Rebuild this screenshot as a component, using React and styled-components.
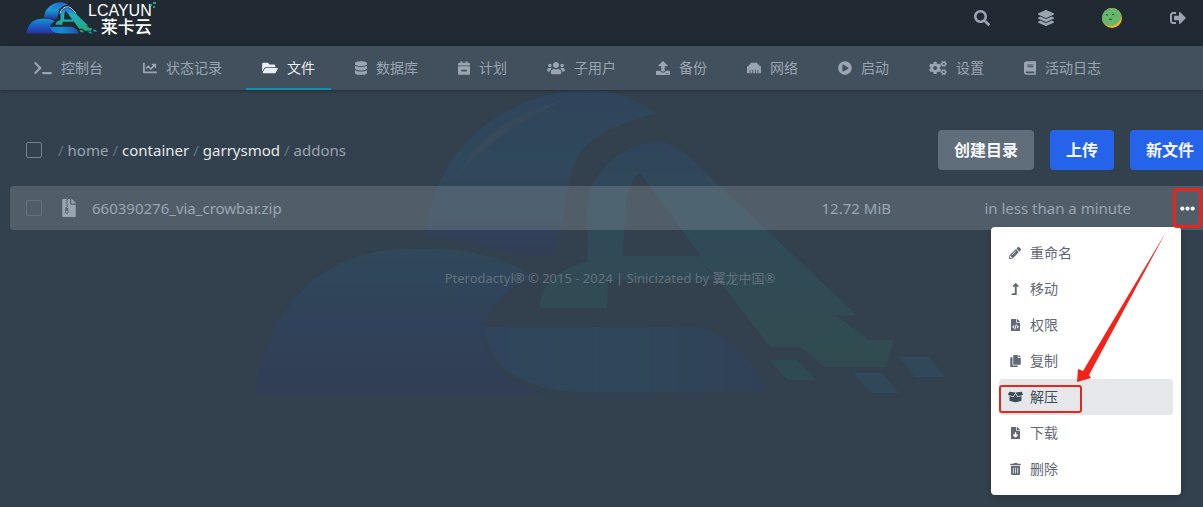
import React, { useState } from 'react';
import styled, { createGlobalStyle } from 'styled-components';
import {
  FaBook,
  FaBoxOpen,
  FaCalendarMinus,
  FaChartLine,
  FaCogs,
  FaCopy,
  FaDatabase,
  FaEllipsisH,
  FaEthernet,
  FaFileArchive,
  FaFileCode,
  FaFileDownload,
  FaFolderOpen,
  FaLayerGroup,
  FaLevelUpAlt,
  FaPencilAlt,
  FaPlayCircle,
  FaSearch,
  FaSignOutAlt,
  FaTerminal,
  FaTrashAlt,
  FaUpload,
  FaUsers,
} from 'react-icons/fa';

const tabs = [
  { label: '控制台', icon: FaTerminal, width: 18 },
  { label: '状态记录', icon: FaChartLine, width: 14 },
  { label: '文件', icon: FaFolderOpen, width: 16, active: true },
  { label: '数据库', icon: FaDatabase, width: 12 },
  { label: '计划', icon: FaCalendarMinus, width: 12 },
  { label: '子用户', icon: FaUsers, width: 18 },
  { label: '备份', icon: FaUpload, width: 14 },
  { label: '网络', icon: FaEthernet, width: 14 },
  { label: '启动', icon: FaPlayCircle, width: 14 },
  { label: '设置', icon: FaCogs, width: 18 },
  { label: '活动日志', icon: FaBook, width: 12 },
];

const actions = [
  { label: '重命名', icon: FaPencilAlt, width: 12 },
  { label: '移动', icon: FaLevelUpAlt, width: 8 },
  { label: '权限', icon: FaFileCode, width: 9 },
  { label: '复制', icon: FaCopy, width: 11 },
  { label: '解压', icon: FaBoxOpen, width: 15, marked: true },
  { label: '下载', icon: FaFileDownload, width: 9 },
  { label: '删除', icon: FaTrashAlt, width: 11 },
];

// the cloud mark, used small in the header and large behind the page
const CloudMark = ({ id, outlined }) => (
  <svg viewBox="255 90 700 305" aria-hidden="true">
    <defs>
      <linearGradient id={`${id}-dome`} x1="0" y1="0" x2="0" y2="1">
        <stop offset="0" stopColor="#1b6fd6" />
        <stop offset="0.5" stopColor="#1796d2" />
        <stop offset="1" stopColor="#2b2f9e" />
      </linearGradient>
      <linearGradient id={`${id}-cloud`} x1="0" y1="0" x2="0" y2="1">
        <stop offset="0" stopColor="#1a93cf" />
        <stop offset="0.5" stopColor="#1c5cc4" />
        <stop offset="1" stopColor="#2c2f9c" />
      </linearGradient>
      <linearGradient id={`${id}-base`} x1="0" y1="0" x2="1" y2="0">
        <stop offset="0" stopColor="#1873e0" />
        <stop offset="0.4" stopColor="#1a8cc8" />
        <stop offset="1" stopColor="#1f4eb4" />
      </linearGradient>
      <linearGradient id={`${id}-arm`} x1="0" y1="0" x2="0" y2="1">
        <stop offset="0" stopColor="#1b6fd6" />
        <stop offset="0.3" stopColor="#1fb0c4" />
        <stop offset="1" stopColor="#22a873" />
      </linearGradient>
    </defs>
    <path
      fill={`url(#${id}-dome)`}
      d="M430 238C430 205 446 165 470 142C500 110 545 90 590 90C620 90 645 102 660 114C620 122 590 138 579 160C569 180 570 225 554 255C515 262 480 240 430 238Z"
    />
    <path
      fill={`url(#${id}-cloud)`}
      d="M258 394C262 350 286 305 316 280C345 258 380 248 412 249C465 246 515 258 535 278C505 290 490 306 488 332C486 362 515 384 552 394Z"
    />
    <path
      fill={`url(#${id}-base)`}
      d="M488 327H700C735 336 757 360 768 392H590C530 392 488 368 488 327Z"
    />
    <path
      fill={`url(#${id}-arm)`}
      fillRule="evenodd"
      d="M543 308C543 284 562 268 590 262C593 236 586 205 595 186C607 162 632 142 660 142C686 142 704 170 740 202L777 237L833 290L860 315H838L872 340H896L890 367H827L804 347H773L727 287L700 258L724 280H611L610 308ZM643 173C626 184 628 222 626 256H704Z"
    />
    <path fill="#1fa58c" d="M773 360H800L820 380H790Z" />
    <path fill="#1d8fc0" d="M856 373H885L902 393H874ZM902 357H932L948 377H918Z" />
    <path
      fill="#b7cbe0"
      fillOpacity="0.4"
      d="M463 173C480 140 515 112 565 101C525 120 495 138 463 173Z"
    />
    {outlined && (
      <path
        fill="none"
        stroke="#dff1fa"
        strokeWidth="9"
        d="M586 200C594 160 626 134 660 134C690 134 710 164 742 196"
      />
    )}
  </svg>
);

const Avatar = () => (
  <svg width="20" height="20" viewBox="0 0 20 20" aria-hidden="true">
    <defs>
      <clipPath id="avatar-clip">
        <circle cx="10" cy="10" r="10" />
      </clipPath>
    </defs>
    <g clipPath="url(#avatar-clip)">
      <rect width="20" height="20" fill="#f5b32a" />
      <circle cx="8.500" cy="7" r="10.800" fill="#66b66c" />
      <path
        d="M4 6.500l2 .8M10 6.800l2-.8M7 11.500q1.500-1 3 0"
        stroke="#24522c"
        strokeWidth="1.200"
        fill="none"
      />
    </g>
  </svg>
);

const App = () => {
  const [allChecked, setAllChecked] = useState(false);
  const [checked, setChecked] = useState(false);

  return (
    <>
      <GlobalStyle />
      <Header>
        <Brand href="#">
          <CloudMark id="brand" outlined />
          <BrandText>
            <BrandName>LCAYUN</BrandName>
            <BrandLocal>莱卡云</BrandLocal>
          </BrandText>
          <Sparks viewBox="0 0 6 6" aria-hidden="true">
            <path d="M0 2h2v2H0zM3 0h3v2H3zM3 4h2v2H3z" />
          </Sparks>
        </Brand>
        <HeaderLinks>
          <HeaderButton type="button" aria-label="搜索"><FaSearch /></HeaderButton>
          <HeaderLink href="#" aria-label="服务器"><FaLayerGroup /></HeaderLink>
          <HeaderLink href="#" aria-label="账户"><Avatar /></HeaderLink>
          <HeaderButton type="button" aria-label="退出"><FaSignOutAlt /></HeaderButton>
        </HeaderLinks>
      </Header>

      <SubNav>
        {tabs.map(({ label, icon: Icon, width, active }) => (
          <Tab key={label} href="#" $active={active}>
            <IconBox $width={width} $height={14}><Icon /></IconBox>
            {label}
          </Tab>
        ))}
      </SubNav>

      <Main>
        <Watermark><CloudMark id="watermark" /></Watermark>
        <Content>
          <Toolbar>
            <Checkbox
              aria-label="全选"
              checked={allChecked}
              onChange={(e) => setAllChecked(e.target.checked)}
            />
            <Breadcrumbs>
              /<Crumb>home</Crumb>
              /<CrumbLink href="#">container</CrumbLink>
              /<CrumbLink href="#">garrysmod</CrumbLink>
              /<Crumb>addons</Crumb>
            </Breadcrumbs>
            <Buttons>
              <Button type="button" $secondary>创建目录</Button>
              <Button type="button">上传</Button>
              <Button type="button">新文件</Button>
            </Buttons>
          </Toolbar>

          <FileRow>
            <Checkbox
              $faint
              aria-label="选择 660390276_via_crowbar.zip"
              checked={checked}
              onChange={(e) => setChecked(e.target.checked)}
            />
            <FileLink href="#">
              <IconBox $width={14} $height={18}><FaFileArchive /></IconBox>
              <FileName>660390276_via_crowbar.zip</FileName>
              <FileSize>12.72 MiB</FileSize>
              <FileDate>in less than a minute</FileDate>
            </FileLink>
            <MenuAnchor>
              <MoreButton type="button" aria-label="更多"><FaEllipsisH /></MoreButton>
              <Menu>
                {actions.map(({ label, icon: Icon, width, marked }) => (
                  <MenuItem key={label} type="button" $marked={marked}>
                    <MenuIcon>
                      <IconBox $width={width} $height={12}><Icon /></IconBox>
                    </MenuIcon>
                    {label}
                  </MenuItem>
                ))}
                <Arrow viewBox="0 0 92 155" aria-hidden="true">
                  <path d="M90 4L13 147L15 150L1 154L2 141L7 143Z" />
                </Arrow>
              </Menu>
            </MenuAnchor>
          </FileRow>

          <Footer>Pterodactyl® © 2015 - 2024 | Sinicizated by 翼龙中国®</Footer>
        </Content>
      </Main>
    </>
  );
};

export default App;

const GlobalStyle = createGlobalStyle`
  *, *::before, *::after {
    box-sizing: border-box;
  }

  body {
    margin: 0;
    background: #33404d;
    color: #9aa5b1;
    font-family: 'Noto Sans', 'Noto Sans CJK SC', sans-serif;
    font-size: 15px;
    line-height: 20px;
  }

  #root {
    display: flex;
    flex-direction: column;
    min-height: 100vh;
  }

  a {
    color: inherit;
    text-decoration: none;
  }

  button {
    border: 0;
    padding: 0;
    background: none;
    color: inherit;
    font: inherit;
    cursor: pointer;
  }
`;

const IconBox = styled.span`
  display: block;
  flex-shrink: 0;
  width: ${({ $width }) => $width}px;
  height: ${({ $height }) => $height}px;

  svg {
    display: block;
    width: 100%;
    height: 100%;
  }
`;

const Header = styled.header`
  display: flex;
  justify-content: space-between;
  height: 46px;
  padding: 0 17px 10px 26px;
  background: #212933;
`;

const Brand = styled.a`
  position: relative;
  display: flex;
  align-items: center;

  > svg:first-child {
    width: 72px;
    height: 32px;
  }
`;

const BrandText = styled.span`
  display: flex;
  flex-direction: column;
  align-items: flex-end;
  margin-left: -10px;
  padding-top: 2px;
  color: #fff;
`;

const BrandName = styled.span`
  font-family: 'Liberation Sans', sans-serif;
  font-size: 16px;
  line-height: 14px;
`;

const BrandLocal = styled.span`
  font-family: 'Noto Sans CJK SC', sans-serif;
  font-size: 17px;
  font-weight: 500;
  line-height: 16px;
`;

const Sparks = styled.svg`
  position: absolute;
  top: 2px;
  right: -4px;
  width: 6px;
  height: 6px;
  fill: #1fa58c;
`;

const HeaderLinks = styled.nav`
  display: flex;
  align-items: center;
  gap: 48px;
  font-size: 16px;

  svg {
    display: block;
  }
`;

const HeaderLink = styled.a`
  display: block;
`;

const HeaderButton = styled.button`
  display: block;
`;

const SubNav = styled.nav`
  display: flex;
  gap: 8px;
  height: 44px;
  padding: 0 18px;
  background: #424f5c;
  box-shadow: 0 1px 3px rgba(0, 0, 0, 0.3);
  z-index: 1;
  overflow: hidden;
  flex-shrink: 0;
`;

const Tab = styled.a`
  display: flex;
  align-items: center;
  gap: 9px;
  padding: 0 16px;
  font-size: 14px;
  white-space: nowrap;
  color: ${({ $active }) => ($active ? '#e8edf2' : '#9aa5b1')};
  box-shadow: ${({ $active }) => ($active ? 'inset 0 -2px #178fab' : 'none')};
`;

const Main = styled.main`
  position: relative;
  flex: 1;
  padding: 40px 0 16px 10px;
  overflow: hidden;
`;

const Watermark = styled.div`
  position: absolute;
  inset: 0;
  display: flex;
  justify-content: center;
  align-items: flex-start;
  opacity: 0.1;

  svg {
    width: 700px;
    flex-shrink: 0;
  }
`;

const Content = styled.div`
  position: relative;
  margin-right: -7px;
`;

const Toolbar = styled.div`
  display: flex;
  align-items: center;
  padding-left: 16px;
  margin-bottom: 16px;
`;

const Checkbox = styled.input.attrs({ type: 'checkbox' })`
  appearance: none;
  width: 16px;
  height: 16px;
  margin: 0;
  flex-shrink: 0;
  border: 1px solid ${({ $faint }) => ($faint ? '#66727f' : '#758290')};
  border-radius: 2px;

  &:checked {
    background: #2563eb;
  }
`;

const Breadcrumbs = styled.nav`
  display: flex;
  flex: 1;
  gap: 4px;
  padding-left: 16px;
  color: #66727f;
`;

const Crumb = styled.span`
  color: #9aa5b1;
`;

const CrumbLink = styled.a`
  color: #e4e7eb;
`;

const Buttons = styled.div`
  display: flex;
  gap: 16px;
`;

const Button = styled.button`
  height: 40px;
  padding: 0 16px;
  border-radius: 4px;
  background: ${({ $secondary }) => ($secondary ? '#606d7b' : '#2563eb')};
  color: #f5f7fa;
  font-size: 16px;
  font-weight: 700;
  white-space: nowrap;
`;

const FileRow = styled.div`
  display: flex;
  align-items: center;
  height: 44px;
  padding-left: 16px;
  border-radius: 4px;
  background: rgba(123, 135, 148, 0.42);
`;

const FileLink = styled.a`
  display: flex;
  align-items: center;
  flex: 1;
  padding-left: 20px;
  white-space: nowrap;
`;

const FileName = styled.span`
  flex: 1;
  padding-left: 16px;
`;

const FileSize = styled.span`
  text-align: right;
`;

const FileDate = styled.span`
  width: 240px;
  text-align: right;
`;

const MenuAnchor = styled.div`
  position: relative;
  display: flex;
  margin-left: 42px;
  margin-right: 8px;

  &::after {
    content: '';
    position: absolute;
    inset: 0;
    border: 3px solid #e8251d;
    border-radius: 4px;
    pointer-events: none;
  }
`;

const MoreButton = styled.button`
  display: flex;
  align-items: center;
  justify-content: center;
  width: 29px;
  height: 40px;
  color: #f5f7fa;
`;

const Menu = styled.div`
  position: absolute;
  top: 39px;
  right: 21px;
  width: 190px;
  padding: 8px;
  border-radius: 4px;
  background: #fff;
  box-shadow: 0 2px 6px rgba(0, 0, 0, 0.2);
`;

const MenuItem = styled.button`
  position: relative;
  display: flex;
  align-items: center;
  gap: 7px;
  width: 100%;
  height: 36px;
  padding: 0 8px;
  border-radius: 4px;
  background: ${({ $marked }) => ($marked ? '#e5e7eb' : 'transparent')};
  color: ${({ $marked }) => ($marked ? '#3e4c59' : '#606875')};
  font-size: 14px;

  &::after {
    content: '';
    display: ${({ $marked }) => ($marked ? 'block' : 'none')};
    position: absolute;
    top: 6px;
    left: 0;
    width: 83px;
    height: 28px;
    border: 2px solid #e8251d;
    border-radius: 3px;
  }
`;

const MenuIcon = styled.span`
  display: flex;
  justify-content: center;
  width: 16px;
`;

const Arrow = styled.svg`
  position: absolute;
  top: 1px;
  left: 85px;
  width: 92px;
  height: 155px;
  fill: #f4231a;
  pointer-events: none;
`;

const Footer = styled.footer`
  padding-top: 38px;
  text-align: center;
  font-size: 13px;
  color: #63717e;
`;
